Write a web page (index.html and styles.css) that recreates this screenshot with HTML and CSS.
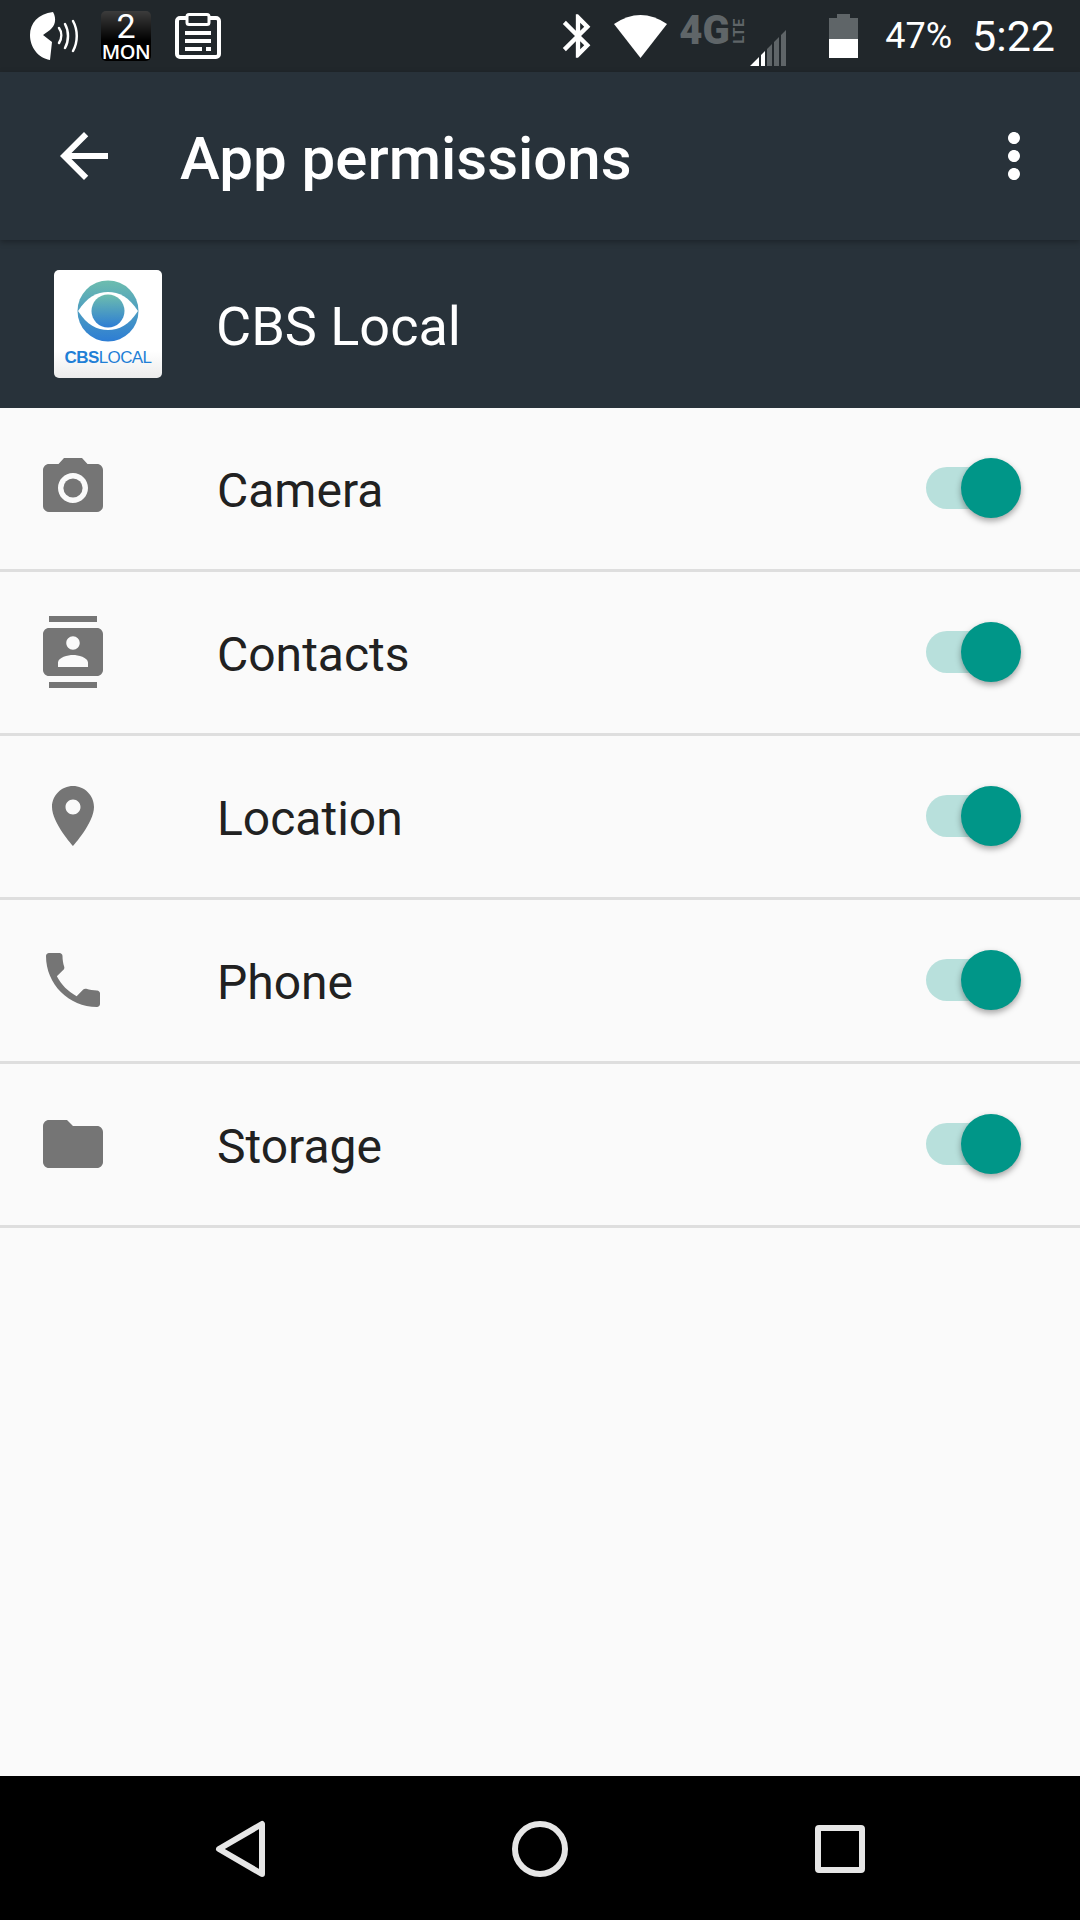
FILE: index.html
```html
<!DOCTYPE html>
<html lang="en">
<head>
  <meta charset="utf-8">
  <title>App permissions</title>
  <link rel="stylesheet" href="styles.css">
</head>
<body>
  <div class="screen">
    <!-- Status bar -->
    <div class="status-bar">
      <div class="status-left">
        <svg class="ic-voice" viewBox="0 0 50 50" fill="#fff">
          <path d="M23 1C8 3 0 12 0 24c0 12 8 23 20 25l2-18-9-7 7-5c5-4 7-11 3-18z"/>
          <g fill="none" stroke="#fff" stroke-width="2.5" stroke-linecap="round">
            <path d="M29 17c3 4 3 10 0 15"/>
            <path d="M35 13c4 7 4 17 0 24"/>
            <path d="M43 10c5 9 5 21 0 30"/>
          </g>
        </svg>
        <div class="cal-icon">
          <span class="cal-day">2</span>
          <span class="cal-month">MON</span>
        </div>
        <svg class="ic-clip" viewBox="0 0 46 46">
          <rect x="2" y="5" width="42" height="39" rx="3" fill="none" stroke="#fff" stroke-width="4"/>
          <rect x="12" y="1.5" width="22" height="10" rx="2" fill="#21272b" stroke="#fff" stroke-width="3"/>
          <path d="M10 18h26v4H10zM10 26h26v4H10zM10 34h17v4H10zM31 34h5v4h-5z" fill="#fff"/>
        </svg>
      </div>
      <div class="status-right">
        <svg class="ic-bt" viewBox="0 0 24 24" fill="#fff">
          <path d="M17.71 7.71L12 2h-1v7.59L6.41 5 5 6.41 10.59 12 5 17.59 6.41 19 11 14.41V22h1l5.71-5.71-4.3-4.29 4.3-4.29zM13 5.83l1.88 1.88L13 9.59V5.83zm1.88 10.46L13 18.17v-3.76l1.88 1.88z"/>
        </svg>
        <svg class="ic-wifi" viewBox="0 0 53 43" fill="#fff">
          <path d="M0 9Q26.5-9 53 9L26.500 43z"/>
        </svg>
        <div class="net">
          <span class="net-4g">4G</span>
          <span class="net-lte">LTE</span>
        </div>
        <svg class="ic-signal" viewBox="0 0 36 36">
          <path d="M0 36L9 27V36zM11 25L15 21V36H11z" fill="#fff"/>
          <path d="M17 19L22 14V36H17zM24 12L29 7V36H24zM31 5L36 0V36H31z" fill="#5f6568"/>
        </svg>
        <svg class="ic-batt" viewBox="0 0 29 44">
          <path d="M8 0h13v4h8v21H0V4h8z" fill="#5f6568"/>
          <rect y="25" width="29" height="19" fill="#fff"/>
        </svg>
        <span class="batt-pct">47%</span>
        <span class="clock">5:22</span>
      </div>
    </div>

    <!-- Toolbar -->
    <header class="toolbar">
      <svg class="icon back" viewBox="0 0 24 24" fill="#fff">
        <path d="M20 11H7.830l5.590-5.590L12 4l-8 8 8 8 1.410-1.410L7.830 13H20v-2z"/>
      </svg>
      <h1 class="title">App permissions</h1>
      <svg class="icon more" viewBox="0 0 24 24" fill="#fff">
        <path d="M12 8c1.100 0 2-.9 2-2s-.9-2-2-2-2 .9-2 2 .9 2 2 2zm0 2c-1.100 0-2 .9-2 2s.9 2 2 2 2-.9 2-2-.9-2-2-2zm0 6c-1.100 0-2 .9-2 2s.9 2 2 2 2-.9 2-2-.9-2-2-2z"/>
      </svg>
    </header>

    <!-- App header -->
    <div class="app-head">
      <div class="logo">
        <svg class="logo-eye" viewBox="0 0 62 62">
          <defs>
            <linearGradient id="eyeGrad" x1="0" y1="0" x2="0" y2="1">
              <stop offset="0" stop-color="#6dbdae"/>
              <stop offset="1" stop-color="#2d7dd4"/>
            </linearGradient>
          </defs>
          <circle cx="31" cy="31" r="30.500" fill="url(#eyeGrad)"/>
          <path d="M1 31C10 17 20 12 31 12s21 5 30 19c-9 14-19 19-30 19S10 45 1 31z" fill="#fff"/>
          <circle cx="31" cy="31" r="16.500" fill="url(#eyeGrad)"/>
        </svg>
        <div class="logo-text"><b>CBS</b>LOCAL</div>
      </div>
      <div class="app-name">CBS Local</div>
    </div>

    <!-- Permission list -->
    <div class="list">
      <div class="row">
        <svg class="icon row-icon" viewBox="0 0 24 24" fill="#757575">
          <circle cx="12" cy="12" r="3.200"/>
          <path d="M9 2L7.170 4H4c-1.100 0-2 .9-2 2v12c0 1.100.9 2 2 2h16c1.100 0 2-.9 2-2V6c0-1.100-.9-2-2-2h-3.170L15 2H9zm3 15c-2.760 0-5-2.240-5-5s2.240-5 5-5 5 2.240 5 5-2.240 5-5 5z"/>
        </svg>
        <span class="row-label">Camera</span>
        <div class="switch"><span class="thumb"></span></div>
      </div>
      <div class="row">
        <svg class="icon row-icon" viewBox="0 0 24 24" fill="#757575">
          <path d="M20 0H4v2h16V0zM4 24h16v-2H4v2zM20 4H4c-1.100 0-2 .9-2 2v12c0 1.100.9 2 2 2h16c1.100 0 2-.9 2-2V6c0-1.100-.9-2-2-2zm-8 2.750c1.240 0 2.250 1.010 2.250 2.250s-1.010 2.250-2.250 2.250S9.750 10.240 9.750 9 10.760 6.750 12 6.750zM17 17H7v-1.500c0-1.670 3.330-2.500 5-2.500s5 .83 5 2.500V17z"/>
        </svg>
        <span class="row-label">Contacts</span>
        <div class="switch"><span class="thumb"></span></div>
      </div>
      <div class="row">
        <svg class="icon row-icon" viewBox="0 0 24 24" fill="#757575">
          <path d="M12 2C8.130 2 5 5.130 5 9c0 5.250 7 13 7 13s7-7.750 7-13c0-3.870-3.130-7-7-7zm0 9.500c-1.380 0-2.500-1.120-2.500-2.500s1.120-2.500 2.500-2.500 2.500 1.120 2.500 2.500-1.120 2.500-2.500 2.500z"/>
        </svg>
        <span class="row-label">Location</span>
        <div class="switch"><span class="thumb"></span></div>
      </div>
      <div class="row">
        <svg class="icon row-icon" viewBox="0 0 24 24" fill="#757575">
          <path d="M6.620 10.790c1.440 2.830 3.760 5.140 6.590 6.590l2.200-2.200c.27-.27.67-.36 1.020-.24 1.120.37 2.330.57 3.570.57.55 0 1 .45 1 1V20c0 .55-.45 1-1 1-9.390 0-17-7.610-17-17 0-.55.45-1 1-1h3.500c.55 0 1 .45 1 1 0 1.250.2 2.450.57 3.570.11.35.03.74-.25 1.020l-2.200 2.200z"/>
        </svg>
        <span class="row-label">Phone</span>
        <div class="switch"><span class="thumb"></span></div>
      </div>
      <div class="row">
        <svg class="icon row-icon" viewBox="0 0 24 24" fill="#757575">
          <path d="M10 4H4c-1.100 0-1.990.9-1.990 2L2 18c0 1.100.9 2 2 2h16c1.100 0 2-.9 2-2V8c0-1.100-.9-2-2-2h-8l-2-2z"/>
        </svg>
        <span class="row-label">Storage</span>
        <div class="switch"><span class="thumb"></span></div>
      </div>
    </div>

    <!-- Navigation bar -->
    <nav class="nav-bar">
      <svg class="nav-icon" viewBox="0 0 72 72" fill="none" stroke="#e6e6e6" stroke-width="6" stroke-linejoin="round">
        <path d="M58 12V62L15 37z"/>
      </svg>
      <svg class="nav-icon" viewBox="0 0 72 72" fill="none" stroke="#e6e6e6" stroke-width="6">
        <circle cx="36" cy="37" r="25"/>
      </svg>
      <svg class="nav-icon" viewBox="0 0 72 72" fill="none" stroke="#e6e6e6" stroke-width="6" stroke-linejoin="round">
        <rect x="14" y="16" width="44" height="42" rx="1"/>
      </svg>
    </nav>
  </div>
</body>
</html>
```

FILE: styles.css
```css
* {
  box-sizing: border-box;
}

body {
  margin: 0;
  font-family: Roboto, "Noto Sans", sans-serif;
  background-color: #fafafa;
}

.screen {
  display: flex;
  flex-direction: column;
  width: 1080px;
  height: 1920px;
  overflow: hidden;
}

/* Status bar */
.status-bar {
  display: flex;
  justify-content: space-between;
  align-items: center;
  height: 72px;
  padding: 0 25px 0 30px;
  background-color: #21272b;
  color: #fff;
}

.status-left,
.status-right {
  display: flex;
  align-items: center;
}

.ic-voice {
  width: 50px;
  height: 50px;
  margin-right: 21px;
}

.cal-icon {
  display: flex;
  flex-direction: column;
  align-items: center;
  width: 50px;
  height: 50px;
  margin-right: 24px;
  border-radius: 5px;
  background: linear-gradient(#3c3c3c, #000 60%);
}

.cal-day {
  height: 31px;
  font-size: 34px;
  line-height: 31px;
}

.cal-month {
  height: 19px;
  font-size: 20px;
  font-family: "Open Sans", sans-serif;
  font-weight: 600;
  letter-spacing: -0.5px;
  line-height: 19px;
}

.ic-clip {
  width: 46px;
  height: 46px;
}

.ic-bt {
  width: 52px;
  height: 52px;
  margin-right: 10px;
}

.ic-wifi {
  width: 53px;
  height: 43px;
  margin-right: 12px;
}

.net {
  display: flex;
  align-self: flex-start;
  align-items: center;
  height: 28px;
  margin-top: 10px;
  color: #5f6568;
  font-weight: 900;
  line-height: 1;
}

.net-4g {
  width: 53px;
  font-size: 40px;
}

.net-lte {
  font-size: 15px;
  font-weight: 700;
  letter-spacing: 0.5px;
  writing-mode: vertical-rl;
  transform: rotate(180deg);
}

.ic-signal {
  align-self: flex-start;
  width: 36px;
  height: 36px;
  margin: 23px 43px 0 3px;
}

.ic-batt {
  width: 29px;
  height: 44px;
  margin-right: 27px;
}

.batt-pct {
  margin-right: 20px;
  font-size: 36px;
}

.clock {
  font-size: 43px;
}

/* Toolbar */
.toolbar {
  position: relative;
  z-index: 1;
  display: flex;
  align-items: center;
  height: 168px;
  padding: 0 30px 0 48px;
  background-color: #28323a;
  box-shadow: 0 2px 6px rgba(0, 0, 0, 0.3);
  color: #fff;
}

.icon {
  flex: none;
  width: 72px;
  height: 72px;
}

.title {
  flex: 1;
  margin: 0 0 0 60px;
  padding-top: 4px;
  font-size: 60px;
  font-weight: 500;
}

/* App header */
.app-head {
  display: flex;
  align-items: center;
  height: 168px;
  padding-left: 54px;
  background-color: #28323a;
  color: #fff;
}

.logo {
  display: flex;
  flex-direction: column;
  align-items: center;
  width: 108px;
  height: 108px;
  padding-top: 10px;
  border-radius: 5px;
  background: linear-gradient(#fff 75%, #ececec);
}

.logo-eye {
  width: 62px;
  height: 62px;
}

.logo-text {
  margin-top: 6px;
  color: #1f7fd6;
  font-family: "Liberation Sans", sans-serif;
  font-size: 17px;
  letter-spacing: -0.6px;
}

.app-name {
  margin-left: 54px;
  padding-top: 5px;
  font-size: 54px;
}

/* Permission list */
.list {
  flex: 1;
}

.row {
  display: flex;
  align-items: center;
  height: 164px;
  padding: 0 59px 1px 37px;
  border-bottom: 3px solid #dedede;
}

.row-label {
  flex: 1;
  margin-left: 108px;
  padding-top: 5px;
  color: #212121;
  font-size: 48px;
}

.switch {
  position: relative;
  width: 95px;
  height: 42px;
}

.switch::before {
  content: "";
  display: block;
  width: 84px;
  height: 42px;
  border-radius: 21px;
  background-color: #b8e0dc;
}

.thumb {
  position: absolute;
  top: -9px;
  right: 0;
  width: 60px;
  height: 60px;
  border-radius: 50%;
  background-color: #009688;
  box-shadow: 0 3px 6px rgba(0, 0, 0, 0.35);
}

/* Navigation bar */
.nav-bar {
  display: flex;
  justify-content: space-between;
  align-items: center;
  height: 144px;
  padding: 0 204px;
  background-color: #000;
}

.nav-icon {
  width: 72px;
  height: 72px;
}
```
